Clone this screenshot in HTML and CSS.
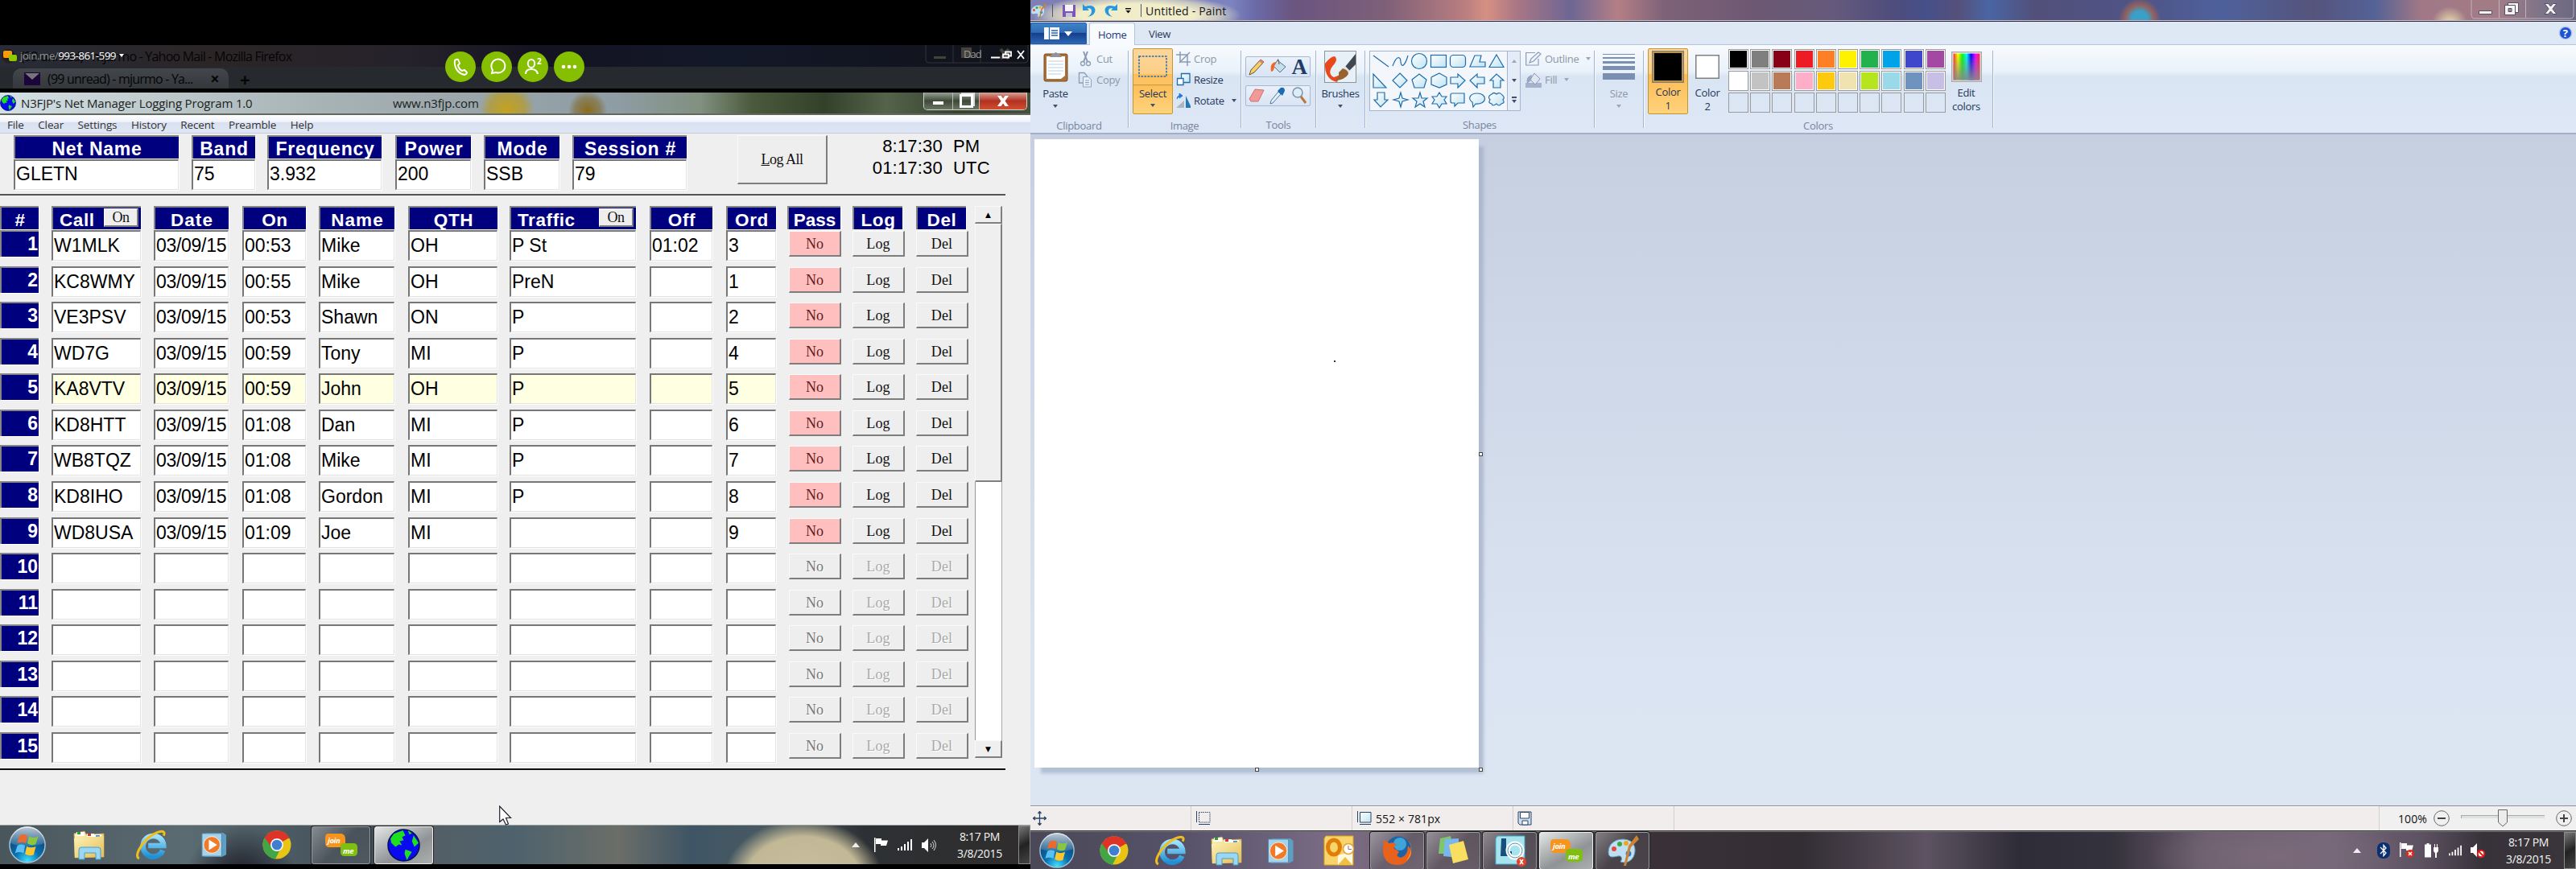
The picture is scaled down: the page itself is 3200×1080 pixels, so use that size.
FILE: index.html
```html
<!DOCTYPE html>
<html lang="en">
<head>
<meta charset="utf-8">
<title>Desktop</title>
<link rel="stylesheet" href="styles.css">
</head>
<body>
<svg class="defs" width="0" height="0" aria-hidden="true">
  <defs>
    <radialGradient id="gOrb" cx=".5" cy=".95" r=".9"><stop offset="0" stop-color="#3fe0ff"/><stop offset=".4" stop-color="#0a6fb0"/><stop offset="1" stop-color="#0b3a66"/></radialGradient>
    <linearGradient id="gShine" x1="0" y1="0" x2="0" y2="1"><stop offset="0" stop-color="#fff" stop-opacity=".75"/><stop offset="1" stop-color="#fff" stop-opacity=".1"/></linearGradient>
    <linearGradient id="gFold" x1="0" y1="0" x2="1" y2="1"><stop offset="0" stop-color="#fdf3b8"/><stop offset="1" stop-color="#e3bd55"/></linearGradient>
    <linearGradient id="gBlue" x1="0" y1="0" x2="0" y2="1"><stop offset="0" stop-color="#9ee4fb"/><stop offset="1" stop-color="#1f8fd6"/></linearGradient>
    <linearGradient id="gPale" x1="0" y1="0" x2="1" y2="1"><stop offset="0" stop-color="#fff"/><stop offset="1" stop-color="#bfe3f2"/></linearGradient>
    <linearGradient id="gRain" x1="0" y1="0" x2="1" y2="0"><stop offset="0" stop-color="#f22"/><stop offset=".17" stop-color="#ff0"/><stop offset=".34" stop-color="#0f0"/><stop offset=".5" stop-color="#0ff"/><stop offset=".67" stop-color="#00f"/><stop offset=".84" stop-color="#f0f"/><stop offset="1" stop-color="#f22"/></linearGradient>
    <linearGradient id="gGrey" x1="0" y1="0" x2="0" y2="1"><stop offset="0" stop-color="#888" stop-opacity="0"/><stop offset="1" stop-color="#888" stop-opacity=".95"/></linearGradient>
    <symbol id="orb" viewBox="0 0 48 48">
      <circle cx="24" cy="24" r="23" fill="url(#gOrb)" stroke="#a9c3d6" stroke-width="1.5"/>
      <path d="M2 22A22 22 0 0 1 46 22Q24 30 2 22Z" fill="url(#gShine)"/>
      <path d="M14 12Q19 9 24 12L22 22Q17 19 11 22Z" fill="#ee6a2c"/><path d="M26 13Q32 16 38 13L35 23Q29 26 24 22Z" fill="#8cc63e"/>
      <path d="M11 25Q16 22 21 25L19 35Q14 32 8 35Z" fill="#5cc0f5"/><path d="M23 26Q29 29 35 26L32 37Q26 39 21 36Z" fill="#fdc62f"/>
    </symbol>
    <symbol id="chrome" viewBox="0 0 36 36">
      <circle cx="18" cy="18" r="17.5" fill="#e8c514"/><path d="M18 18L2.8 9.3A17.5 17.5 0 0 1 33.2 9.3Z" fill="#dd3427"/>
      <path d="M18 18L2.8 9.3A17.5 17.5 0 0 0 16 35.4L22 24Z" fill="#43a646"/><path d="M18 10H33.6A17.5 17.5 0 0 0 2.8 9.3L10 19Z" fill="#dd3427"/>
      <circle cx="18" cy="18" r="8" fill="#f4f4f4"/><circle cx="18" cy="18" r="6.3" fill="#3f7fcf"/>
    </symbol>
    <symbol id="ie" viewBox="0 0 40 40">
      <path d="M35 27A13.5 13.5 0 1 1 36 21H16" fill="none" stroke="url(#gBlue)" stroke-width="7"/>
      <path d="M4 38C-3 34 8 16 20 8C30 1 40 0 36 8" fill="none" stroke="#f0bd1c" stroke-width="3.2"/>
    </symbol>
    <symbol id="folder" viewBox="0 0 40 38">
      <path d="M1 5L14 2L16 6L38 5V34L2 35Z" fill="url(#gFold)" stroke="#c6a14a" stroke-width=".8"/>
      <path d="M4 3H14V8H4ZM17 5H26V9H17ZM26 6H35V10H26Z" fill="#fff"/><path d="M5 3h4v3H5z" fill="#2aa52a"/><path d="M18 5h4v3h-4z" fill="#d33a2c"/><path d="M28 7h5v2h-5z" fill="#3b8fe0"/>
      <path d="M1 11L38 8V34L2 35Z" fill="url(#gFold)"/>
      <path d="M7 37V25Q7 22 10 22H31Q34 22 34 25V37H28V29H14V37Z" fill="#9bd7f2" stroke="#4a9ec7"/>
    </symbol>
    <symbol id="wmp" viewBox="0 0 34 34">
      <path d="M6 1H29L33 4V30L27 33H4Z" fill="#5d9ec4"/><path d="M1 2H27V32H1Z" fill="#a5d3ea" stroke="#4b87ab"/>
      <circle cx="14" cy="17" r="11" fill="#f07a28" stroke="#fff" stroke-width=".8"/><path d="M10 10L21 17L10 24Z" fill="#fff"/>
    </symbol>
    <symbol id="joinme" viewBox="0 0 40 30">
      <path d="M4 1H20Q25 2 25 8V13Q25 18 20 18H5Q0 18 0 12V6Q0 1 4 1Z" fill="#f7941d"/><path d="M23 13H35Q40 13 40 18V24Q40 29 35 29H24Q19 29 19 24V17Q19 13 23 13Z" fill="#7fbf10"/>
      <text x="3" y="12.5" class="jm">join</text><text x="22" y="25.5" class="jm">me</text>
    </symbol>
    <symbol id="globe" viewBox="0 0 40 40">
      <circle cx="20" cy="20" r="19" fill="#0a0af0" stroke="#001050" stroke-width="1.5"/>
      <path d="M8 6L19 2L22 8L18 10L20 14L15 15L18 20L14 19L10 22L5 17L4 12ZM32 8L38 17L33 22L30 15ZM22 25L30 28L26 34L24 38L21 30ZM25 2L30 5L27 7Z" fill="#1fe01f"/>
    </symbol>
    <symbol id="signal" viewBox="0 0 18 14"><path d="M0 11h2v3H0zM4 9h2v5H4zM8 6h2v8H8zM12 3h2v11h-2zM16 0h2v14h-2z" fill="#fff"/></symbol>
    <symbol id="flag" viewBox="0 0 18 18"><path d="M1 0H2.5V18H1ZM3 1H10V3.5H18L16 10H9V8H3Z" fill="#fff"/></symbol>
    <symbol id="palette" viewBox="0 0 40 40">
      <path d="M20 6C34 6 38 18 33 28C29 35 22 36 17 34C20 30 18 26 14 27C8 28 2 30 2 22C2 12 10 6 20 6Z" fill="#bfe0f2" stroke="#6a9dbf"/>
      <circle cx="9" cy="18" r="3" fill="#e8473d"/><circle cx="16" cy="12" r="3" fill="#3aa83f"/><circle cx="24" cy="11" r="3" fill="#f2a51e"/><circle cx="27" cy="24" r="3.4" fill="#2e75d0"/>
      <path d="M37 1L40 6L30 16L24 39L21 39L27 14Z" fill="#c98438"/>
    </symbol>
  </defs>
</svg>

<main class="screens">
  <section class="remote">
    <div class="letterbox"></div>
    <div class="joinbar">
      <div class="ghost-title"><span class="ff"></span><span>(99 unread) - mjurmo - Yahoo Mail - Mozilla Firefox</span></div>
      <div class="ghost-tabs"><div class="ghost-tab"><svg width="20" height="16"><path d="M0 0H20V16H0Z" fill="#1c0538"/><path d="M1 1H19L10 9Z" fill="#77757c"/></svg><span>(99 unread) - mjurmo - Ya...</span><b>×</b></div><b class="plus">+</b></div>
      <div class="share">
        <svg width="17" height="13"><rect width="11" height="9" rx="2" fill="#fb9c05"/><rect x="7" y="5" width="10" height="8" rx="2" fill="#8ec900"/></svg>
        <span>join.me/<b>993-861-599</b></span><i></i>
      </div>
      <div class="actions">
        <span><svg width="38" height="38"><path d="M12 11q4-3 5 1l1 3-2 2q1 5 5 7l3-1 3 3q0 2-3 3-8-2-11-9-2-5-1-9Z"/></svg></span>
        <span><svg width="38" height="38"><path d="M13 27l1-4a8.500 8.500 0 1 1 4 3Z"/></svg></span>
        <span><svg width="38" height="38"><ellipse cx="17" cy="15" rx="4.200" ry="5"/><path d="M10 28q0-6 7-6t8 6"/><text x="24" y="16">2</text></svg></span>
        <span><svg width="38" height="38"><g class="dots"><circle cx="12" cy="19" r="2.300"/><circle cx="19" cy="19" r="2.300"/><circle cx="26" cy="19" r="2.300"/></g></svg></span>
      </div>
      <svg class="ghost-ctl" width="130" height="24"><path d="M1 0V18Q1 22 5 22H124Q128 22 128 18V0M35 0V22M69 0V22" fill="none" stroke="#333"/><path d="M11 14h15v3H11zM45 3h13v13H45z" fill="#45423c"/><path d="M94 5l10 12M104 5l-10 12" stroke="#45423c" stroke-width="4"/><text x="48" y="16">Dad</text><path d="M82 15.500h11M97 11.500h7v4h-7zM100 11V8.500h7v5h-3M115 7l8 10M123 7l-8 10" fill="none" stroke="#fff" stroke-width="1.800"/></svg>
    </div>
    <div class="gap"></div>
    <header class="app-title">
      <svg width="20" height="20"><use href="#globe"/></svg><span class="t1">N3FJP's Net Manager Logging Program 1.0</span><span class="t2">www.n3fjp.com</span>
      <div class="winctl"><i class="wmin"></i><i class="wmax"></i><i class="wx"><svg width="14" height="13"><path d="M0 0h4.500l2.500 3.500l2.500-3.500h4.500l-4.500 6.500l4.500 6.500h-4.500l-2.500-3.500l-2.500 3.500h-4.500l4.500-6.500z" fill="#fff"/></svg></i></div>
    </header>
    <nav class="menu"><span>File</span><span>Clear</span><span>Settings</span><span>History</span><span>Recent</span><span>Preamble</span><span>Help</span></nav>
    <div class="form">
      <div class="fields" id="fields">
        <label class="f1"><b>Net Name</b><span>GLETN</span></label>
        <label class="f2"><b>Band</b><span>75</span></label>
        <label class="f3"><b>Frequency</b><span>3.932</span></label>
        <label class="f4"><b>Power</b><span>200</span></label>
        <label class="f5"><b>Mode</b><span>SSB</span></label>
        <label class="f6"><b>Session #</b><span>79</span></label>
        <button class="logall"><u>L</u>og All</button>
        <div class="clock"><span>8:17:30</span><span>PM</span><span>01:17:30</span><span>UTC</span></div>
      </div>
      <div class="rule"></div>
      <div class="tablewrap">
        <div class="table" id="table"></div>
        <div class="scroll"><i class="up">▲</i><i class="thumb"></i><i class="track"></i><i class="down">▼</i></div>
      </div>
      <div class="rule dark"></div>
      <svg class="cursor" width="16" height="25"><path d="M.7 1V20.500L5 17L8.500 24L11.500 23L8.500 15.500H14.500Z" fill="#fff" stroke="#223" stroke-width="1.200"/></svg>
    </div>
    <footer class="taskbar tb-left">
      <svg class="orb" width="48" height="46"><use href="#orb"/></svg>
      <svg class="k1" width="40" height="38"><use href="#folder"/></svg>
      <svg class="k2" width="38" height="38"><use href="#ie"/></svg>
      <svg class="k3" width="34" height="32"><use href="#wmp"/></svg>
      <svg class="k4" width="36" height="36"><use href="#chrome"/></svg>
      <span class="task k5"><svg width="40" height="30"><use href="#joinme"/></svg></span>
      <span class="task lit k6"><svg width="41" height="41"><use href="#globe"/></svg></span>
      <div class="tray">
        <i class="tri"></i>
        <svg width="18" height="18"><use href="#flag"/></svg>
        <svg width="18" height="14"><use href="#signal"/></svg>
        <svg width="18" height="17" class="vol"><path d="M0 5H3L8 0V17L3 12H0Z" fill="#fff"/><path d="M11 6q2 3 0 5M13 4q4 5 0 9M15 2q5 6 0 13" fill="none" stroke="#ddd"/></svg>
        <div class="time"><span>8:17 PM</span><span>3/8/2015</span></div><i class="peek"></i>
      </div>
    </footer>
    <div class="endbar"></div>
  </section>

  <section class="local">
    <header class="paint-title">
      <svg width="20" height="21"><use href="#palette"/></svg><i class="bar"></i>
      <svg width="16" height="15"><path d="M0 0H16V15H0Z" fill="#7b55b8"/><path d="M3 0H13V8H3Z" fill="#f5f3fa"/><path d="M4 10H12V15H4Z" fill="#c9c3dc"/></svg>
      <svg width="16" height="17"><path d="M0 0V8H8L5.500 5.500Q11 4 11 9Q11 13 6 16Q16 14 15.500 7Q14 0 3 3Z" fill="#2698e0"/></svg>
      <svg width="16" height="17"><path d="M16 0V8H8L10.500 5.500Q5 4 5 9Q5 13 10 16Q0 14 .5 7Q2 0 13 3Z" fill="#2698e0"/></svg>
      <svg width="8" height="7"><path d="M0 0h7v1.500H0zM.5 3h6L3.500 6.500z" fill="#111"/></svg><i class="bar b2"></i>
      <span>Untitled - Paint</span>
      <svg class="pctl" width="130" height="24"><path d="M1 0V18Q1 23 5 23H124Q128 23 128 18V0M35.500 0V22M68.500 0V22" fill="none" stroke="#cbbfc9" stroke-opacity=".8"/><g fill="#f6f3f5" stroke="#555066"><path d="M10.500 13.500h16v4h-16zM46.500 3.500h13v12h-13z"/><path d="M42.500 6.500h13v12h-13z"/><path d="M47 10.500h4v4h-4z" fill="#a58a90"/><path d="M92 4.500h4.500l3 3.500l3-3.500h4.500l-5.200 6.500l5.200 6.500h-4.500l-3-3.500l-3 3.500h-4.500l5.200-6.500z"/></g></svg>
    </header>
    <nav class="tabs">
      <span class="file"><svg width="36" height="16"><path d="M0 0H19V15H0Z" fill="#f8fbff"/><path d="M6.500 0V15M9 4h8M9 7h8M9 10h8" stroke="#2a62b0" stroke-width="1.300"/><path d="M25 5h10l-5 6z" fill="#fff"/></svg></span>
      <span class="tab on">Home</span><span class="tab">View</span>
      <svg class="help" width="18" height="18"><circle cx="9" cy="9" r="8.500" fill="#b6cbe8"/><circle cx="9" cy="9" r="7" fill="#1d52d4"/><text x="5.800" y="14">?</text></svg>
    </nav>
    <div class="ribbon">
      <div class="group g1"><div class="body">
        <div class="big"><svg width="31" height="38"><rect x="1" y="3" width="29" height="34" rx="2" fill="#a9703a" stroke="#7c4c20"/><path d="M4 6H27V30L22 34H4Z" fill="#fff"/><path d="M6 12h19M6 16h19M6 20h19M6 24h19M6 28h16" stroke="#b7cfe6"/><path d="M8 7L11 3H13Q15.500-1 18 3H20L23 7Z" fill="#8d949c"/></svg><span>Paste</span><i></i></div>
        <div class="list dis"><div><svg width="18" height="20"><path d="M7 1L12 14M12 1L7 14" stroke="#8b9bb5" stroke-width="2" fill="none"/><circle cx="6" cy="16" r="2.500" class="ln"/><circle cx="13" cy="16" r="2.500" class="ln"/></svg><span>Cut</span></div>
        <div><svg width="18" height="20"><path d="M1.500 1.500H8L11 5V14H1.500Z" class="ln"/><path d="M6.500 6.500H13L16.500 10V19H6.500ZM9 11h5M9 13.500h5M9 16h5" fill="#eaf0f9" stroke="#8fa0bd"/></svg><span>Copy</span></div></div>
      </div><p>Clipboard</p></div><i class="sep"></i>
      <div class="group g2"><div class="body">
        <div class="big sel"><svg width="37" height="28"><rect x="1" y="1" width="34" height="25" fill="none" stroke="#2667a8" stroke-width="1.500" stroke-dasharray="2.500 1.500"/></svg><span>Select</span><i></i></div>
        <div class="list"><div class="dis"><svg width="18" height="18"><path d="M5 0V13H18M0 4H14V18M4 14L17 1" fill="none" stroke="#8b9bb5" stroke-width="1.500"/></svg><span>Crop</span></div>
        <div><svg width="18" height="18"><path d="M6.500 1.500H17V12.500H6.500Z" fill="url(#gPale)" stroke="#1f6cab" stroke-width="1.300"/><path d="M1.500 7.500H9V15.500H1.500Z" fill="#fff" stroke="#1f6cab" stroke-width="1.300"/></svg><span>Resize</span></div>
        <div><svg width="20" height="18"><path d="M0 18L10 9V18Z" fill="#aeb6bf"/><path d="M12 3V18H19Z" fill="#2278b8"/><path d="M1 7Q1 3 5 3M4 0L8 3L4 6Z" fill="#2278d8" stroke="#2278d8"/></svg><span>Rotate</span><i></i></div></div>
      </div><p>Image</p></div><i class="sep"></i>
      <div class="group g3"><div class="body">
        <div class="tool"><svg width="20" height="22"><path d="M1 21L3 15L15 2L19 5L7 18Z" fill="#f3d06a" stroke="#6d5526"/><path d="M15 2L19 5L17 7L13 4Z" fill="#e77a7a"/></svg><svg width="20" height="22"><path d="M9 3L19 11L12 18L4 10Z" fill="#c7dfea" stroke="#4d7591"/><path d="M9 3Q10-1 11 8" fill="none" stroke="#555"/><path d="M8 5Q-1 5 1 17Q5 17 5 10Z" fill="#ee6a28"/></svg><b>A</b></div>
        <div class="tool"><svg width="20" height="18"><path d="M1 13L8 1L19 2L12 16H3Z" fill="#f19b98" stroke="#cf6f6c"/></svg><svg width="20" height="22"><path d="M11 6L14 9L4 20L1 21L2 17Z" fill="#dff0fa" stroke="#55789a"/><path d="M10 5L14 1Q19 0 19 5L16 11Z" fill="#1c6cb4"/></svg><svg width="20" height="22"><path d="M12 12L18 20" stroke="#b5793d" stroke-width="3"/><circle cx="8" cy="7" r="6" fill="#dcedf8" stroke="#7f93a8" stroke-width="1.500"/></svg></div>
      </div><p>Tools</p></div><i class="sep"></i>
      <div class="group g4"><div class="body"><div class="big"><svg width="40" height="40"><rect x=".5" y=".5" width="39" height="39" fill="#e6f0f6" stroke="#8f9498"/><path d="M1 16Q8 7 13 7Q17 10 13 16Q2 28 12 33L20 30L16 39Q2 36 1 20Z" fill="#e9481c"/><path d="M39 4L26 20L31 25L39 17Z" fill="#41484f"/><path d="M26 19L32 25L29 28L23 23Z" fill="#dfe3e6"/><path d="M23 22Q30 24 30 29Q26 36 14 37Q19 33 18 27Z" fill="#97622d"/></svg><span>Brushes</span><i></i></div></div></div><i class="sep"></i>
      <div class="group g5"><div class="body">
        <div class="gallery"><svg width="170" height="74">
          <path d="M4 5L23 19"/><path d="M28 18C34 2 38 8 38 13C39 22 44 16 47 5"/><circle cx="61" cy="12" r="9.500"/><rect x="75.500" y="4.500" width="19" height="15"/><rect x="99.500" y="4.500" width="19" height="15" rx="4"/><path d="M130 5H138L136 13H143V19H124Z"/><path d="M157 4L166 19.500H148Z"/>
          <path d="M4 28V45H20Z"/><path d="M37 27L46 36L37 45L28 36Z"/><path d="M61 28L70 35L67 45H55L52 35Z"/><path d="M86 27L95 32V41L86 45L76 41V32Z"/><path d="M100 32H109V28L118 36L109 45V40H100Z"/><path d="M142 32H133V28L124 36L133 45V40H142Z"/><path d="M153 45V36H149L157 28L166 36H162V45Z"/>
          <path d="M9 51V60H5L13 69L22 60H18V51Z"/><path d="M38 51L40 58L47 60L40 62L38 69L36 62L29 60L36 58Z"/><path d="M62 51L64 58H71L66 62L68 69L62 65L56 69L58 62L53 58H60Z"/><path d="M86 51L89 56H95L92 60L95 65H89L86 70L83 65H77L80 60L77 56H83Z"/><path d="M102 52H117V64H109L105 68V64H102Q100 64 100 62V54Q100 52 102 52Z"/><path d="M131 65L128 69L127 63C120 58 125 52 133 52C146 52 146 66 131 65Z"/><path d="M151 53Q154 50 157 53Q161 50 164 54Q168 57 165 60Q168 64 163 65Q160 69 157 65Q152 69 151 65Q146 64 149 60Q145 56 151 53Z"/></svg>
          <div class="gs"><i class="ga u"></i><i class="ga"></i><i class="ga m"></i></div></div>
        <div class="list dis"><div><svg width="20" height="18"><path d="M12 1.500H.7V17H16V9M5 14L7 9L16 1L19 3L10 12Z" fill="none" stroke="#8b9bb5" stroke-width="1.200"/></svg><span>Outline</span><i></i></div>
        <div><svg width="20" height="20"><path d="M0 14H20V20H0Z" fill="#a4b2cb"/><path d="M11 2L18 9L12 16L6 10Z" fill="#dfe6f0" stroke="#8b9bb5"/><path d="M8 4Q0 6 2 15L7 11Z" fill="#97a6c2"/></svg><span>Fill</span><i></i></div></div>
      </div><p>Shapes</p></div><i class="sep"></i>
      <div class="group g6"><div class="body"><div class="big dis"><svg width="40" height="34"><path d="M0 1h40v1H0zM0 5h40v2H0zM0 10h40v3H0zM0 16h40v5H0zM0 25h40v8H0z" fill="#7b8fb1"/></svg><span>Size</span><i></i></div></div></div><i class="sep"></i>
      <div class="group g7"><div class="body">
        <div class="big sel col"><svg width="40" height="40"><rect x=".5" y=".5" width="39" height="39" fill="#b9924c" stroke="#7d7d7d"/><rect x="3" y="3" width="34" height="34"/></svg><span>Color<br>1</span></div>
        <div class="big col c2nd"><svg width="30" height="30"><rect x=".75" y=".75" width="28.500" height="28.500" fill="#fff" stroke="#808080" stroke-width="1.500"/></svg><span>Color<br>2</span></div>
        <div class="swatches" id="swatches"></div>
        <div class="big col"><svg width="38" height="38"><rect x=".75" y=".75" width="36.500" height="36.500" fill="#fff" stroke="#aaa" stroke-width="1.500"/><path d="M2.500 2.500h33v33h-33z" fill="url(#gRain)"/><path d="M2.500 2.500h33v33h-33z" fill="url(#gGrey)"/></svg><span>Edit<br>colors</span></div>
      </div><p>Colors</p></div><i class="sep"></i>
    </div>
    <div class="work"><div class="canvas"><i class="h e"></i><i class="h s"></i><i class="h se"></i><i class="dot"></i></div></div>
    <div class="status">
      <span class="cell"><svg width="17" height="18"><path d="M8.500 1V17M1 9H16M6.500 3L8.500.5L10.500 3M6.500 15L8.500 17.500L10.500 15M3 7L.5 9L3 11M14 7L16.500 9L14 11" fill="none" stroke="#2b4468" stroke-width="1.300"/></svg></span>
      <span class="cell"><svg width="19" height="18"><path d="M4.500 1.500H18V14H4.500Z" fill="none" stroke="#2b4468" stroke-dasharray="1.500 1"/><path d="M1.500 0V14M4 16.500H18" stroke="#2b4468"/></svg></span>
      <span class="cell"><svg width="19" height="18"><path d="M4.500 1.500H18V14H4.500Z" fill="url(#gPale)" stroke="#2b4468"/><path d="M1.500 0V14M4 16.500H18" stroke="#2b4468"/></svg><span>552 × 781px</span></span>
      <span class="cell"><svg width="18" height="18"><path d="M1 1H17V17H3L1 15Z" fill="#cfdff0" stroke="#2b4468"/><path d="M3.500 1.500H14.500V9H3.500ZM6 12H13V17H6Z" fill="#fff" stroke="#2b4468"/></svg></span>
      <span class="cell fill"></span>
      <div class="zoom"><span>100%</span>
        <svg width="20" height="20"><circle cx="10" cy="10" r="9.300" fill="#f0f0f0" stroke="#666"/><path d="M5 10h10" stroke="#444" stroke-width="2"/></svg>
        <svg class="sl" width="104" height="24"><path d="M0 8.500H104V12H0Z" fill="#dde1e1"/><path d="M0 8.500H104M.5 8V12" stroke="#a8acac"/><path d="M46.500 1.500H57.500V17L52 22L46.500 17Z" fill="#ececec" stroke="#666"/></svg>
        <svg width="20" height="20"><circle cx="10" cy="10" r="9.300" fill="#f0f0f0" stroke="#666"/><path d="M5 10h10M10 5v10" stroke="#444" stroke-width="2"/></svg>
      </div>
    </div>
    <footer class="taskbar tb-right">
      <svg class="orb" width="44" height="44"><use href="#orb"/></svg>
      <svg class="r1" width="36" height="36"><use href="#chrome"/></svg>
      <svg class="r2" width="38" height="38"><use href="#ie"/></svg>
      <svg class="r3" width="40" height="38"><use href="#folder"/></svg>
      <svg class="r4" width="34" height="33"><use href="#wmp"/></svg>
      <svg class="r5" width="38" height="38"><path d="M3 1H37V37H1V4Z" fill="#f8d46a" stroke="#dba21e"/><ellipse cx="13" cy="15" rx="7.500" ry="9" fill="none" stroke="#e07e07" stroke-width="5"/><path d="M18 25L36 20V37H18Z" fill="#fff8e0"/><path d="M18 37L27 27L36 37Z" fill="#f0bf3f"/><circle cx="31" cy="17" r="6.500" fill="#fff" stroke="#e2a432" stroke-width="1.500"/><path d="M31 13V17.500H35" fill="none" stroke="#a66"/></svg>
      <span class="task"><svg width="38" height="38"><circle cx="20" cy="17" r="15.500" fill="#1b62a8"/><circle cx="22" cy="11" r="8" fill="#41a4d6"/><path d="M2 6L9 10Q14 8 18 12Q14 13 15 17Q19 18 21 21Q15 26 23 28Q32 26 32 13Q37 18 36 24Q31 37 19 37Q3 37 1 21Q1 14 2 6Z" fill="#e8621b"/><path d="M33 6Q40 20 30 31Q37 26 36 15Z" fill="#f9c53b"/></svg></span>
      <span class="task"><svg width="40" height="36"><path d="M3 3L16 0L20 22L1 22Z" fill="#7fc66b"/><path d="M9 4L26 3L26 27L7 25Z" fill="#79b5ee"/><path d="M14 11L32 6L38 29L19 34Z" fill="#f8df5f"/></svg></span>
      <span class="task"><svg width="40" height="40"><path d="M4 2H38V37H2V5Z" fill="#a7e3ee" stroke="#41a8c4"/><path d="M9 5H15V21H22V27H8Z" fill="#17507c"/><circle cx="26" cy="20" r="9" fill="none" stroke="#fff" stroke-width="5"/><circle cx="26" cy="20" r="9" fill="none" stroke="#4d97b2" stroke-width="1"/><circle cx="34" cy="34" r="6" fill="#e0442e"/><path d="M32 31l4 6M36 31l-4 6" stroke="#fff" stroke-width="1.500"/></svg></span>
      <span class="task lit"><svg width="40" height="30"><use href="#joinme"/></svg></span>
      <span class="task"><svg width="40" height="40"><use href="#palette"/></svg></span>
      <div class="tray">
        <i class="tri"></i>
        <svg width="16" height="20"><rect width="16" height="20" rx="7" fill="#0b2f70"/><path d="M4 6L11 13L8 16.500V3.500L11 7L4 14" fill="none" stroke="#fff" stroke-width="1.300"/></svg>
        <svg width="20" height="20"><path d="M1 0H2.500V18H1ZM3 1H10V3.500H18L16 10H9V8H3Z" fill="#fff"/><circle cx="14" cy="14" r="5" fill="#dd2b22"/><path d="M12 12l4 4M16 12l-4 4" stroke="#fff" stroke-width="1.500"/></svg>
        <svg width="20" height="20"><path d="M3.500 1V2.500H1V18.500H9V2.500H6.500V1Z" fill="#fff"/><path d="M12 6h6v4q0 2-2 3v6h-2v-6q-2-1-2-3zM13 2h1v4h-1zM16 2h1v4h-1z" fill="#fff"/></svg>
        <svg width="16" height="14"><use href="#signal"/></svg>
        <svg width="19" height="20"><path d="M0 6H3L8 1V18L3 13H0Z" fill="#fff"/><circle cx="13" cy="14" r="4.200" fill="#fff" stroke="#e01818" stroke-width="2"/><path d="M10 11l6 6" stroke="#e01818" stroke-width="2"/></svg>
        <div class="time"><span>8:17 PM</span><span>3/8/2015</span></div><i class="peek"></i>
      </div>
    </footer>
  </section>
</main>
<script src="app.js"></script>
</body>
</html>
```
FILE: styles.css
```css
* { box-sizing: border-box; }
body { margin: 0; width: 3200px; height: 1080px; overflow: hidden; background: #000; font-family: "Open Sans", "Noto Sans", sans-serif; font-size: 13px; }
i { font-style: normal; }
svg { display: block; flex: none; }
.defs { position: absolute; }
.jm { font: italic bold 9.5px "Open Sans", sans-serif; fill: #fff; letter-spacing: -.4px; }
.screens { display: flex; }
.remote, .local { display: flex; flex-direction: column; height: 1080px; flex: none; }
.remote { width: 1280px; }
.local { width: 1920px; }
.letterbox { height: 56px; background: #000; flex: none; }

/* join.me viewer bar */
.joinbar { position: relative; height: 54px; flex: none; overflow: hidden; color: #050505; font-size: 16px; background: linear-gradient(90deg, #282c38, #2b2526 20%, #26222b 40%, #141321 52%, #131828 70%, #11131b); }
.ghost-title { height: 27px; padding-left: 2px; display: flex; align-items: center; gap: 7px; letter-spacing: -.78px; white-space: nowrap; }
.ghost-title .ff { width: 17px; height: 18px; border-radius: 50%; background: radial-gradient(circle at 60% 40%, #101c33 35%, #50200a); }
.ghost-tabs { height: 27px; background: #26292d; display: flex; align-items: flex-end; }
.ghost-tab { width: 268px; height: 25px; margin-left: 16px; padding: 0 12px 0 14px; border-radius: 10px 10px 0 0; background: linear-gradient(#43464a, #34373b); display: flex; align-items: center; gap: 9px; letter-spacing: -.8px; white-space: nowrap; }
.ghost-tab b { margin-left: auto; font-size: 20px; line-height: 20px; }
.plus { font-size: 22px; line-height: 24px; margin-left: 14px; }
.share { position: absolute; left: 4px; top: 3px; display: flex; align-items: center; gap: 4px; height: 20px; color: #929292; font-size: 13.500px; letter-spacing: -.58px; }
.share b { color: #fff; font-weight: 400; }
.share i { border: 3px solid transparent; border-top: 4px solid #fff; border-bottom: 0; }
.actions { position: absolute; left: 553px; top: 8px; display: flex; gap: 7px; }
.actions span { width: 38px; height: 38px; border-radius: 50%; background: #86be00; }
.actions svg { fill: none; stroke: #fff; stroke-width: 2; }
.actions text { font: bold 10px "Open Sans", sans-serif; fill: #fff; stroke: none; }
.actions .dots { fill: #fff; stroke: none; }
.ghost-ctl { position: absolute; right: 1px; top: 0; }
.ghost-ctl text { font: 13px "Open Sans", sans-serif; fill: #999; letter-spacing: -1px; }
.gap { height: 5px; flex: none; background: #000; }

/* Net Manager window */
.app-title { height: 28px; flex: none; display: flex; align-items: center; border-bottom: 2px solid #60685f; font-size: 15px; color: #1b1f22; white-space: nowrap;
  background: radial-gradient(circle at 630px 22px, #c4a21e 0, #b79b22aa 22px, transparent 34px), radial-gradient(circle at 730px 22px, #8b6c1c 0, #7d682888 16px, transparent 24px), linear-gradient(90deg, #d3e0e5, #c3ced1 12%, #a9b4b7 30%, #9aa6aa 45%, #8e9ca4 60%, #81907f 68%, #4b5a3c 73%, #33412a 80%, #55634b 86%, #34422e 93%, #46503f); }
.t1 { margin-left: 6px; width: 462px; letter-spacing: -.16px; }
.t2 { letter-spacing: -.15px; }
.winctl { margin-left: auto; margin-right: 4px; align-self: flex-start; display: flex; height: 22px; width: 129px; border: 1px solid #cfd3cf; border-top: 0; border-radius: 0 0 5px 5px; overflow: hidden; }
.winctl i { display: flex; align-items: center; justify-content: center; border-right: 1px solid #bbb; background: linear-gradient(#98a094, #3e4a38 50%, #6a7464); }
.wmin { width: 36px; }
.wmin::after { content: ""; width: 13px; height: 4px; margin-top: 5px; background: #fff; }
.wmax { width: 33px; }
.wmax::after { content: ""; width: 11px; height: 11px; border: 3px solid #fff; box-shadow: 2px -2px 0 #ddd; }
.winctl .wx { flex: 1; border: 0; background: linear-gradient(#d7a296, #b33122 50%, #d1502f); }
.menu { height: 22px; flex: none; display: flex; gap: 17.500px; padding: 1px 9px 0; align-items: center; font-size: 13.500px; letter-spacing: -.15px; color: #333; background: linear-gradient(#fff 0, #eff2f9 38%, #d9e0f0 42%, #dfe6f5); }
.form { position: relative; height: 860px; flex: none; background: #efefef; font-family: "Liberation Sans", Arial, sans-serif; font-size: 23px; color: #000; border-top: 1px solid #c5cad4; }
.fields { display: flex; height: 75px; padding: 2px 0 0 17px; }
.fields label { display: flex; flex-direction: column; gap: 1px; }
.fields b, .hd > * { background: #00007f; color: #fff; border: solid #858585; border-width: 2px 0 0 2px; box-shadow: 1px 1px 0 #fff; text-align: center; letter-spacing: .6px; }
.fields b { height: 29px; line-height: 30px; font-size: 23px; letter-spacing: .75px; }
.fields span, .in { background: #fff; border: solid; border-width: 2px 1px 1px 2px; border-color: #777 #e2e2e2 #e2e2e2 #777; box-shadow: 1px 1px 0 #fff; }
.fields label span { height: 38px; line-height: 32px; padding-left: 1px; }
.f1 { width: 205px; margin-right: 16px; } .f2 { width: 79px; margin-right: 15px; } .f3 { width: 142px; margin-right: 17px; }
.f4 { width: 94px; margin-right: 16px; } .f5 { width: 94px; margin-right: 16px; } .f6 { width: 142px; }
button, .bt { font-family: "Liberation Serif", "Times New Roman", serif; background: #eee; color: #111; border: solid; border-width: 1px 2px 2px 1px; border-color: #fafafa #7d7d7d #7d7d7d #fafafa; text-align: center; padding: 0; }
.logall { width: 112px; height: 61px; margin-left: 63px; font-size: 18px; letter-spacing: -.5px; }
.clock { width: 170px; margin-left: 41px; display: grid; grid-template-columns: 102px 1fr; column-gap: 13px; grid-auto-rows: 27px; line-height: 27px; }
.clock span { background: none; border: 0; box-shadow: none; font-size: 22px; letter-spacing: .2px; }
.clock span:nth-child(odd) { text-align: right; }
.rule { height: 2px; width: 1249px; background: #555; }
.rule.dark { background: #111; }
.tablewrap { display: flex; height: 712px; padding-top: 13px; }
.table { width: 1211px; }
.row, .hd { display: flex; align-items: flex-start; }
.hd { height: 30px; }
.hd > * { height: 29px; font-weight: 700; font-size: 22.500px; line-height: 31px; white-space: nowrap; }
.hd .c4, .hd .c2 { letter-spacing: 1.100px; }
.row { height: 44.570px; }
.hd .with { display: flex; justify-content: space-between; padding: 0 3px 0 8px; }
.hd button { width: 43px; height: 23px; margin-top: 1px; font-size: 18px; line-height: 20px; letter-spacing: -.5px; }
.in { height: 38px; line-height: 35px; padding-left: 1px; white-space: nowrap; }
.row .c0 { height: 33px; line-height: 30px; padding-right: 1px; background: #00007f; color: #fff; font-weight: 700; font-size: 23px; text-align: right; border: solid #858585; border-width: 2px 0 0 2px; box-shadow: 1px 1px 0 #fff; }
.row .c2 { letter-spacing: -.3px; }
.cur .in { background: #ffffe1; }
.bt { height: 32px; font-size: 18px; line-height: 30px; letter-spacing: .1px; }
.row .bt { margin-top: 1px; }
.no { background: #ffbfbf; color: #5f1c1c; }
.off { color: #aaa; text-shadow: 1px 1px 0 #fff; }
.off.c9 { color: #777; background: #eee; }
.c0 { width: 48px; margin-right: 16px; } .c1 { width: 111px; margin-right: 16px; } .c2 { width: 93px; margin-right: 17px; } .c3 { width: 79px; margin-right: 16px; }
.c4 { width: 94px; margin-right: 17px; } .c5 { width: 111px; margin-right: 15px; } .c6 { width: 157px; margin-right: 17px; } .c7 { width: 78px; margin-right: 17px; }
.c8 { width: 62px; margin-right: 16px; } .c9 { width: 65px; margin-right: 14px; } .c10 { width: 65px; margin-right: 14px; } .c11 { width: 65px; }
.hd .c9 { letter-spacing: 0; margin-left: -2px; width: 66px; margin-right: 15px; } .hd .c10, .hd .c11 { width: 62px; } .hd .c10 { margin-right: 17px; }
.scroll { width: 34px; height: 686px; display: flex; flex-direction: column; }
.scroll i { display: block; background: #efefef; border: solid; border-width: 1px 2px 2px 1px; border-color: #f8f8f8 #808080 #808080 #f8f8f8; font-size: 9px; text-align: center; line-height: 20px; font-family: "DejaVu Sans", sans-serif; }
.scroll .up, .scroll .down { height: 22px; }
.scroll .thumb { height: 321px; }
.scroll .track { flex: 1; background: #fff; border-color: #fff #aaa #fff #999; border-width: 0 1px; }
.cursor { position: absolute; left: 620px; top: 835px; }

/* taskbars */
.taskbar { display: flex; align-items: center; flex: none; border-top: 1px solid #99a09c; }
.tb-left { height: 49px; background: radial-gradient(ellipse 100px 78px at 998px 70px, #c9bf9f 0, #c2b896 72%, transparent 100%), radial-gradient(circle at 300px 70px, #14121c 0, transparent 70px), linear-gradient(90deg, #49565c, #5b6b72 18%, #3f4e57 36%, #545f66 42%, #4e626d 50%, #6b6e68 60%, #3f5565 67%, #4a5a60 76%, #2d3034 84%, #2f2d2c); }
.endbar { flex: 1; background: #000; }
.tb-left .orb { margin: 0 33px 0 10px; } .k1 { margin-right: 38px; } .k2 { margin-right: 42px; } .k3 { margin-right: 43px; } .k4 { margin-right: 25px; }
.task { width: 67px; height: 47px; border: 1px solid #9a9aa0; border-radius: 3px; display: flex; align-items: center; justify-content: center; background: linear-gradient(135deg, #b9b9bc88, #55555a66 50%, #77777c44); box-shadow: 0 0 0 1px #222; flex: none; margin-right: 3px; }
.tb-left .task { width: 73px; margin-right: 5px; }
.task.lit { background: linear-gradient(150deg, #e4e6e6, #8f9395 60%, #adb0b0); border-color: #eee; }
.tray { margin-left: auto; display: flex; align-items: center; height: 100%; color: #f4f4f4; }
.tri { border: 5px solid transparent; border-bottom: 6px solid #eee; border-top: 0; }
.tb-left .tri { margin-right: 17px; } .tb-left .tray > svg { margin-right: 12px; }
.time { width: 80px; display: flex; flex-direction: column; align-items: center; font-size: 14px; line-height: 21.500px; letter-spacing: -.3px; }
.tb-left .time { width: 86px; margin-right: 5px; margin-left: -1px; }
.peek { width: 15px; height: 100%; border: 1px solid #8b8b8b; background: linear-gradient(150deg, #777 0, #222 50%, #444); }
.tb-right { height: 47px; border-top: 1px solid #777; background: radial-gradient(ellipse 160px 50px at 1550px 30px, #7a6a7a, transparent), linear-gradient(90deg, #4a4856, #57526a 10%, #7c6d86 20%, #6a5a68 27%, #4a4048 34%, #3a3138 40%, #332e34 50%, #5d5362 58%, #2e2c36 64%, #34323c 70%, #6b5d6c 76%, #75677a 84%, #5d5261 90%, #37323a 94%, #3a3539); }
.tb-right .orb { margin: 0 31px 0 11px; } .r1 { margin-right: 33px; } .r2 { margin-right: 31px; } .r3 { margin-right: 30px; } .r4 { margin-right: 36px; } .r5 { margin-right: 20px; }
.tb-right .tray > svg { margin-right: 11px; } .tb-right .tri { margin-right: 20px; }
.tb-right .tray .time { width: 86px; margin: 0 1px 0 -1px; }

/* Paint window */
.paint-title { height: 27px; flex: none; position: relative; display: flex; align-items: center; border-bottom: 1px solid #2d2838; box-shadow: inset 0 -1px #cdc3d2; font-size: 14px; color: #16161c; letter-spacing: .2px;
  background: radial-gradient(circle at 1378px 24px, #3aa0c8 0 10px, #d06a3a88 18px, transparent 26px), radial-gradient(circle at 1763px 30px, #efe6b0 0, transparent 22px), radial-gradient(ellipse 130px 26px at 132px 19px, #f1edc9 55%, #e6e2c2aa 80%, transparent 100%), linear-gradient(90deg, #7d7fb5, #7c83bf 13%, #6a6ba8 14.500%, #6a5580 17%, #7e6078 23%, #b87d80 28%, #d69083 29.500%, #a97685 31.500%, #6d6694 35%, #b57f86 38%, #7d6278 41%, #6d5872 47%, #655a7c 52%, #4d4c7c 56%, #46508a 58%, #55507a 60%, #4a65a4 62%, #52507a 65%, #4f5486 72%, #4e619c 77%, #55547c 83%, #546296 87%, #a27886 90%, #a17c86 95%, #7b7388 98%, #6b6680); }
.paint-title .bar { width: 1px; height: 16px; background: #55566b; margin: 0 12px 0 7px; }
.paint-title svg:nth-of-type(2) { margin-right: 9px; } .paint-title svg:nth-of-type(3) { margin-right: 11px; } .paint-title svg:nth-of-type(4) { margin-right: 10px; }
.paint-title .b2 { margin: 0 5px 0 11px; }
.paint-title .pctl { margin-left: auto; margin-right: 1px; align-self: flex-start; }
.tabs { height: 29px; flex: none; display: flex; align-items: flex-end; background: #dee8f4; border-bottom: 1px solid #b6c4de; font-size: 13px; color: #2a3a5c; letter-spacing: -.35px; }
.file { width: 70px; height: 27px; margin-right: 3px; border: 1px solid #2a57a5; border-radius: 0 2px 0 0; background: linear-gradient(#3e83c6, #2f6cb6 45%, #153f8c 50%, #2d67b3); display: flex; align-items: center; padding-left: 16px; }
.tab { height: 27px; line-height: 29px; padding: 0 11px 0 17px; }
.tab.on { height: 28px; margin-bottom: -1px; width: 57px; padding: 0 9px 0 10px; background: #f8fbfe; border: 1px solid #b6c4de; border-bottom: 0; border-radius: 3px 3px 0 0; color: #22377c; }
.help { margin: 0 4px 5px auto; }
.help text { font: bold 13px "Open Sans", sans-serif; fill: #fff; }
.ribbon { height: 111px; flex: none; display: flex; padding-top: 4px; background: linear-gradient(#f8fbfe, #e9f1fa 30%, #dae5f3 36%, #dde7f5); border-bottom: 2px solid #a3afc6; font-size: 13px; letter-spacing: -.3px; color: #24365a; }
.sep { width: 1px; height: 96px; margin-top: 3px; background: #a5b5d1; box-shadow: 1px 0 #f6f9fd; flex: none; }
.group { display: flex; flex-direction: column; flex: none; }
.group p { margin: 4px 0 0; text-align: center; line-height: 20px; color: #77859f; }
.body { display: flex; height: 82px; }
.g1 { width: 121px; } .g1 .body { padding-left: 7px; gap: 4px; }
.g2 { width: 139px; } .g2 .body { padding-left: 5px; gap: 4px; }
.g3 { width: 92px; } .g3 .body { padding: 10px 0 0 5px; flex-direction: column; gap: 10px; }
.g4 { width: 60px; } .g6 { width: 60px; } .g4 .big, .g6 .big { width: 60px; }
.g5 { width: 284px; } .g5 .body { padding-left: 5px; gap: 6px; }
.g7 { width: 433px; } .g7 .body { padding-left: 5px; }
.big { width: 48px; display: grid; grid-template-rows: 45px 22px 15px; justify-items: center; align-items: center; text-align: center; }
.big i, .list i { border: 3.500px solid transparent; border-top: 4px solid #3f4f6c; border-bottom: 0; }
.big i { margin-top: -6px; }
.list i { margin-left: 5px; }
.big.sel { width: 50px; border: 1px solid #c4962d; border-radius: 2px; background: linear-gradient(#fbd69c, #fdcf86 38%, #fdbb52 39%, #ffd37d); grid-template-rows: 44px 22px 14px; }
.g2 .sel { background: linear-gradient(#fbd69c, #fdcf86 38%, #fdbf5c 39%, #fdc467 55%, #cf9c38 55% 56.200%, #fdbf5a 57%, #ffd37d); }
.big.col { width: 50px; grid-template-rows: 45px 37px; line-height: 17px; align-items: center; }
.big.col.sel { grid-template-rows: 43px 37px; }
.big.c2nd { width: 48px; margin-right: 1px; }
.g7 .big:last-child { width: 49px; margin-left: 1px; }
.list { display: flex; flex-direction: column; }
.list div { height: 26px; display: flex; align-items: center; gap: 4px; }
.g1 .list svg { margin-right: 1px; } .g2 .list svg { width: 18px; }
.dis { color: #8d97a8; }
.dis i { border-top-color: #9aa6bb; }
.ln { fill: none; stroke: #8b9bb5; stroke-width: 1.300; }
.tool { width: 81px; height: 26px; border: 1px solid #a9b8d2; border-radius: 2px; display: flex; align-items: center; justify-content: space-around; background: linear-gradient(#eaf1fa, #d9e4f3); }
.tool b { font: bold 27px "Liberation Serif", serif; color: #1e3c66; }
.gallery { width: 188px; height: 75px; margin-top: 3px; border: 1px solid #a5b5d1; display: flex; background: #f3f7fc; }
.gallery svg path, .gallery svg rect, .gallery svg circle { fill: url(#gPale); stroke: #1f6cab; stroke-width: 1.200; }
.gallery svg path:nth-child(2) { fill: none; }
.gs { width: 17px; border-left: 1px solid #a5b5d1; display: flex; flex-direction: column; background: #e3ecf7; }
.ga { height: 24px; display: grid; place-content: center; }
.ga::after { content: ""; border: 3.500px solid transparent; border-top: 4px solid #3f4f6c; border-bottom: 0; }
.ga.u::after { border-bottom: 4px solid #9aa6bb; border-top: 0; }
.ga.m::before { content: ""; height: 2px; margin-bottom: 2px; background: #3f4f6c; }
.swatches { width: 270px; margin: 1px 0 0 1px; display: grid; grid-template-columns: repeat(10, 25px); grid-auto-rows: 25px; gap: 2px 2.200px; align-content: start; }
.swatches i { border: 1px solid #9b9b9b; }
.swatches i.full { box-shadow: inset 0 0 0 1px #fff; }
.work { flex: 1; background: linear-gradient(#c6cfe0, #dbe4f2 80%, #dce6f2); padding: 6px 0 0 5px; }
.canvas { width: 552px; height: 781px; position: relative; background: #fff; box-shadow: 7px 8px 4px -1px #9cabc3aa; }
.h { position: absolute; width: 5px; height: 5px; background: #fff; border: 1px solid #444; }
.e { left: 552px; top: 389px; } .s { left: 274px; top: 781px; } .se { left: 552px; top: 781px; }
.dot { position: absolute; left: 372px; top: 275px; width: 2px; height: 2px; background: #333; }
.status { height: 32px; flex: none; display: flex; background: #f1edec; border-top: 1px solid #8d8f94; border-bottom: 1px solid #333; box-shadow: inset 0 1px #fff; font-size: 14px; color: #111; letter-spacing: .1px; }
.cell { width: 200px; display: flex; align-items: center; gap: 5px; padding-left: 5px; border-right: 1px solid #d2cfce; }
.cell:first-child { padding-left: 3px; }
.cell.fill { flex: 1; width: auto; }
.zoom { width: 244px; display: flex; align-items: center; background: #f0f0f0; padding-left: 23px; }
.zoom > span { width: 44px; }
.sl { margin: 0 14px; }
```
FILE: app.js
```js
const rows = [
  ["W1MLK", "03/09/15", "00:53", "Mike", "OH", "P St", "01:02", "3"],
  ["KC8WMY", "03/09/15", "00:55", "Mike", "OH", "PreN", "", "1"],
  ["VE3PSV", "03/09/15", "00:53", "Shawn", "ON", "P", "", "2"],
  ["WD7G", "03/09/15", "00:59", "Tony", "MI", "P", "", "4"],
  ["KA8VTV", "03/09/15", "00:59", "John", "OH", "P", "", "5"],
  ["KD8HTT", "03/09/15", "01:08", "Dan", "MI", "P", "", "6"],
  ["WB8TQZ", "03/09/15", "01:08", "Mike", "MI", "P", "", "7"],
  ["KD8IHO", "03/09/15", "01:08", "Gordon", "MI", "P", "", "8"],
  ["WD8USA", "03/09/15", "01:09", "Joe", "MI", "", "", "9"]
];
const heads = ["#", "Call", "Date", "On", "Name", "QTH", "Traffic", "Off", "Ord", "Pass", "Log", "Del"];
const current = 5;

let html = '<div class="hd">' + heads.map((h, i) =>
  (i === 1 || i === 6)
    ? `<div class="with c${i}"><span>${h}</span><button>On</button></div>`
    : `<div class="c${i}">${h}</div>`).join("") + "</div>";

for (let n = 1; n <= 15; n++) {
  const data = rows[n - 1] || Array(8).fill("");
  const off = n > rows.length ? " off" : "";
  html += `<div class="row${n === current ? " cur" : ""}"><div class="c0">${n}</div>`
    + data.map((v, i) => `<div class="in c${i + 1}">${v}</div>`).join("")
    + `<div class="bt no c9${off}">No</div><div class="bt c10${off}">Log</div><div class="bt c11${off}">Del</div></div>`;
}
document.getElementById("table").innerHTML = html;

// Default palette; the third row holds empty custom slots
const colors = ["#000", "#7f7f7f", "#880015", "#ed1c24", "#ff7f27", "#fff200", "#22b14c", "#00a2e8", "#3f48cc", "#a349a4",
  "#fff", "#c3c3c3", "#b97a57", "#ffaec9", "#ffc90e", "#efe4b0", "#b5e61d", "#99d9ea", "#7092be", "#c8bfe7"];
document.getElementById("swatches").innerHTML =
  colors.map(c => `<i class="full" style="background:${c}"></i>`).join("") + "<i></i>".repeat(10);
```
